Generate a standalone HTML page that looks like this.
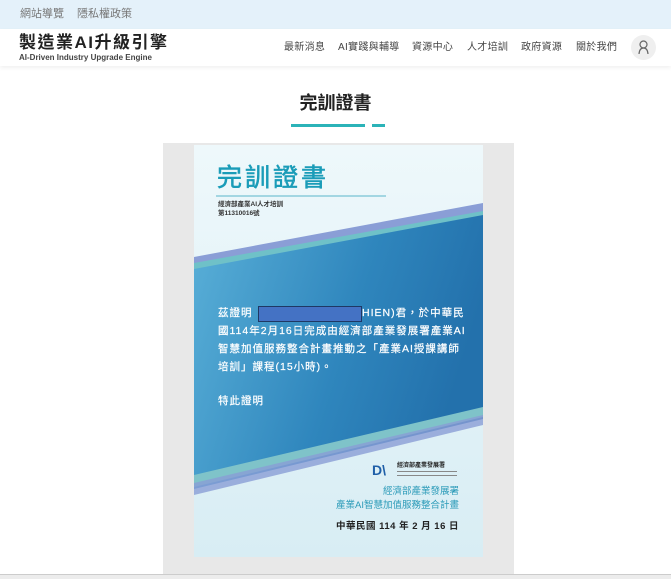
<!DOCTYPE html>
<html><head><meta charset="utf-8"><style>
*{margin:0;padding:0;box-sizing:border-box}
body{width:671px;height:579px;overflow:hidden;background:#fff;font-family:"Liberation Sans","Noto Sans CJK TC",sans-serif;position:relative}
.top{position:absolute;left:0;top:0;width:671px;height:29px;background:#e4f1fa;font-size:11px;color:#777;line-height:13px}
.top span{position:absolute;top:8px}
.hdr{position:absolute;top:29px;left:0;width:671px;height:37px;background:#fff;box-shadow:0 2px 4px rgba(0,0,0,.06)}
.logo{position:absolute;left:19px;top:4px;font-size:17px;line-height:19px;font-weight:bold;letter-spacing:1.5px;color:#222}
.sub{position:absolute;left:19px;top:24px;font-size:8px;line-height:9px;color:#444;font-weight:bold}
.nav{position:absolute;top:13px;font-size:10px;line-height:12px;color:#444;letter-spacing:.3px}
.user{position:absolute;left:631px;top:6px;width:25px;height:25px;border-radius:50%;background:#efefef}
h1{position:absolute;left:0;width:671px;top:92px;text-align:center;font-size:18px;line-height:22px;font-weight:bold;color:#222}
.gray{position:absolute;left:163px;top:143px;width:351px;height:432px;background:#e8e8e8}
.cert{position:absolute;left:194px;top:145px;width:289px;height:412px;background:#e6f3f7;overflow:hidden}
.cert svg{position:absolute;left:0;top:0}
.t{position:absolute;color:#fff;font-size:10.5px;line-height:13px;letter-spacing:1px;left:24px;-webkit-text-stroke:.2px #fff}
</style></head><body>
<div class="top"><span style="left:20px">網站導覽</span><span style="left:77px">隱私權政策</span></div>
<div class="hdr">
<div class="logo">製造業AI升級引擎</div>
<div class="sub">AI-Driven Industry Upgrade Engine</div>
<span class="nav" style="left:284px">最新消息</span>
<span class="nav" style="left:338px">AI實踐與輔導</span>
<span class="nav" style="left:412px">資源中心</span>
<span class="nav" style="left:467px">人才培訓</span>
<span class="nav" style="left:521px">政府資源</span>
<span class="nav" style="left:576px">關於我們</span>
<div class="user"><svg width="25" height="25" viewBox="0 0 25 25"><circle cx="12.5" cy="9.5" r="3.5" fill="none" stroke="#666" stroke-width="1.2"/><path d="M8 19 Q8.5 13 12.5 13 Q16.5 13 17 19" fill="none" stroke="#666" stroke-width="1.2"/></svg></div>
</div>
<h1>完訓證書</h1>
<div style="position:absolute;left:291px;top:124px;width:74px;height:3px;background:#2bb3b8"></div>
<div style="position:absolute;left:372px;top:124px;width:13px;height:3px;background:#2bb3b8"></div>
<div class="gray"></div>
<div class="cert">
<svg width="289" height="412" viewBox="0 0 289 412">
<defs><linearGradient id="g" x1="0" y1="0" x2="1" y2="0.3"><stop offset="0" stop-color="#5ab0d8"/><stop offset=".6" stop-color="#2f86bd"/><stop offset="1" stop-color="#2371ac"/></linearGradient>
<linearGradient id="w" x1="0" y1="0" x2="0" y2="1"><stop offset="0" stop-color="#eef8fb"/><stop offset="1" stop-color="#d8edf4"/></linearGradient></defs>
<rect width="289" height="412" fill="url(#w)"/>
<polygon points="0,112 289,58 289,68 0,122" fill="#8a9ed6"/>
<polygon points="0,118 289,66 289,74 0,128" fill="#6fc1c8"/>
<polygon points="0,124 289,70 289,274 0,344" fill="url(#g)"/>
<polygon points="0,330 289,262 289,272 0,342" fill="#7fc3c9"/>
<polygon points="0,338 289,270 289,280 0,350" fill="#8a9ed6" opacity=".8"/>
<line x1="22" y1="51" x2="192" y2="51" stroke="#2aa0b8" stroke-width=".8"/>
</svg>
<div style="position:absolute;left:23px;top:19px;font-size:25px;line-height:29px;color:#1a9cb8;letter-spacing:3px;-webkit-text-stroke:.6px #1a9cb8">完訓證書</div>
<div style="position:absolute;left:24px;top:55px;font-size:6.5px;color:#333;font-weight:bold;line-height:9px">經濟部產業AI人才培訓<br>第11310016號</div>
<div class="t" style="top:162px">茲證明</div>
<div style="position:absolute;left:64px;top:161px;width:104px;height:16px;background:#4472c4;border:1px solid #1f3864"></div>
<div class="t" style="left:168px;top:162px">HIEN)君，於中華民</div>
<div class="t" style="top:180px">國114年2月16日完成由經濟部產業發展署產業AI</div>
<div class="t" style="top:198px">智慧加值服務整合計畫推動之「產業AI授課講師</div>
<div class="t" style="top:216px">培訓」課程(15小時)。</div>
<div class="t" style="top:250px">特此證明</div>
<div style="position:absolute;left:178px;top:317px;font-size:14px;line-height:16px;color:#1f5fa8;font-weight:bold">D\</div>
<div style="position:absolute;left:203px;top:318px;font-size:6px;line-height:7px;color:#222;font-weight:bold">經濟部產業發展署</div>
<div style="position:absolute;left:203px;top:326px;width:60px;height:5px;border-top:1px solid #888;border-bottom:1px solid #888"></div>
<div style="position:absolute;right:24px;top:340px;font-size:9.5px;color:#2a9ab8;text-align:right;line-height:14px">經濟部產業發展署<br>產業AI智慧加值服務整合計畫</div>
<div style="position:absolute;right:24px;top:376px;font-size:9.5px;line-height:12px;color:#222;font-weight:bold;letter-spacing:.5px">中華民國 114 年 2 月 16 日</div>
</div>
<div style="position:absolute;left:0;top:574px;width:671px;height:5px;background:#ececec;border-top:1px solid #ccc"></div>
</body></html>
